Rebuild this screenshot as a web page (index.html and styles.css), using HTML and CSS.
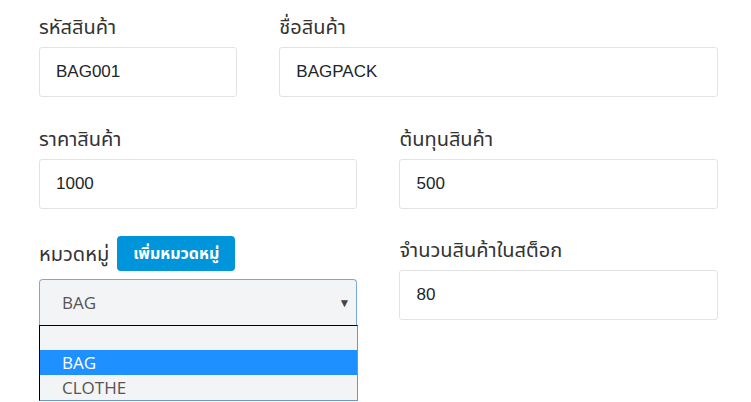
FILE: index.html
```html
<!DOCTYPE html>
<html lang="th">
<head>
    <meta charset="UTF-8">
    <meta name="viewport" content="width=device-width, initial-scale=1.0">
    <title>แก้ไขสินค้า</title>
    <link rel="stylesheet" href="styles.css">
</head>
<body>
    <form class="product-form">
        <div class="field span-2">
            <label class="field-label">รหัสสินค้า</label>
            <input class="text-input" type="text" value="BAG001">
        </div>
        <div class="field span-4">
            <label class="field-label">ชื่อสินค้า</label>
            <input class="text-input" type="text" value="BAGPACK">
        </div>

        <div class="field span-3">
            <label class="field-label">ราคาสินค้า</label>
            <input class="text-input" type="text" value="1000">
        </div>
        <div class="field span-3">
            <label class="field-label">ต้นทุนสินค้า</label>
            <input class="text-input" type="text" value="500">
        </div>

        <div class="field span-3 last-row">
            <div class="label-row">
                <label class="field-label">หมวดหมู่</label>
                <button type="button" class="add-btn">เพิ่มหมวดหมู่</button>
            </div>
            <div class="select-wrap">
                <div class="select-box">
                    <span>BAG</span>
                    <span class="arrow">&#9660;</span>
                </div>
                <ul class="select-list">
                    <li class="option blank">&nbsp;</li>
                    <li class="option selected">BAG</li>
                    <li class="option">CLOTHE</li>
                </ul>
            </div>
        </div>
        <div class="field span-3 last-row">
            <label class="field-label">จำนวนสินค้าในสต็อก</label>
            <input class="text-input" type="text" value="80">
        </div>
    </form>
</body>
</html>
```

FILE: styles.css
```css
html, body {
    min-height: 402px;
}
body {
    margin: 0;
    background: #fff;
    font-family: "Noto Sans", "Noto Sans Thai", Tahoma, sans-serif;
    color: #333;
}
.product-form {
    display: grid;
    grid-template-columns: repeat(6, 1fr);
    column-gap: 42px;
    row-gap: 28px;
    width: 679px;
    padding: 13px 0 0 39px;
}
.span-2 { grid-column: span 2; }
.span-3 { grid-column: span 3; }
.span-4 { grid-column: span 4; }
.field {
    display: flex;
    flex-direction: column;
}
.last-row {
    margin-top: -1px;
}
.field-label {
    display: block;
    font-size: 20px;
    line-height: 27px;
    margin-bottom: 7px;
    color: #333;
}
.text-input {
    box-sizing: border-box;
    height: 50px;
    padding: 0 16px;
    border: 1px solid #e3e3e3;
    border-radius: 3px;
    font-family: "Liberation Sans", Arial, sans-serif;
    font-size: 17px;
    color: #212529;
    background: #fff;
}
.label-row {
    display: flex;
    align-items: center;
    height: 35px;
    margin-bottom: 8px;
}
.label-row .field-label {
    margin: 0 8px 0 0;
}
.add-btn {
    height: 35px;
    width: 118px;
    padding: 0;
    border: none;
    border-radius: 4px;
    background: #0095da;
    color: #fff;
    font-family: "Noto Sans", "Noto Sans Thai", Tahoma, sans-serif;
    font-size: 16px;
    font-weight: bold;
    cursor: pointer;
}
.select-wrap {
    position: relative;
}
.select-box {
    box-sizing: border-box;
    height: 46px;
    display: flex;
    align-items: center;
    justify-content: space-between;
    padding: 0 6px 0 22px;
    border: 1px solid #7fa6dc;
    border-bottom: none;
    border-radius: 4px 4px 0 0;
    background: #f3f4f6;
    font-family: "Open Sans", sans-serif;
    font-size: 17px;
    color: #555;
}
.select-box .arrow {
    font-size: 12px;
    color: #444;
}
.select-list {
    position: absolute;
    top: 46px;
    left: 0;
    width: 319px;
    box-sizing: border-box;
    margin: 0;
    padding: 0;
    list-style: none;
    border-top: 1px solid #000;
    border-left: 1px solid #000;
    border-right: 1px solid #6c95cf;
    border-bottom: 1px solid #6c95cf;
    background: #f3f4f6;
    font-family: "Open Sans", sans-serif;
    font-size: 17px;
    color: #555;
}
.option {
    height: 25px;
    line-height: 25px;
    padding-left: 22px;
}
.option.blank {
    height: 24px;
}
.option.selected {
    background: #1e90ff;
    color: #fff;
}
```
